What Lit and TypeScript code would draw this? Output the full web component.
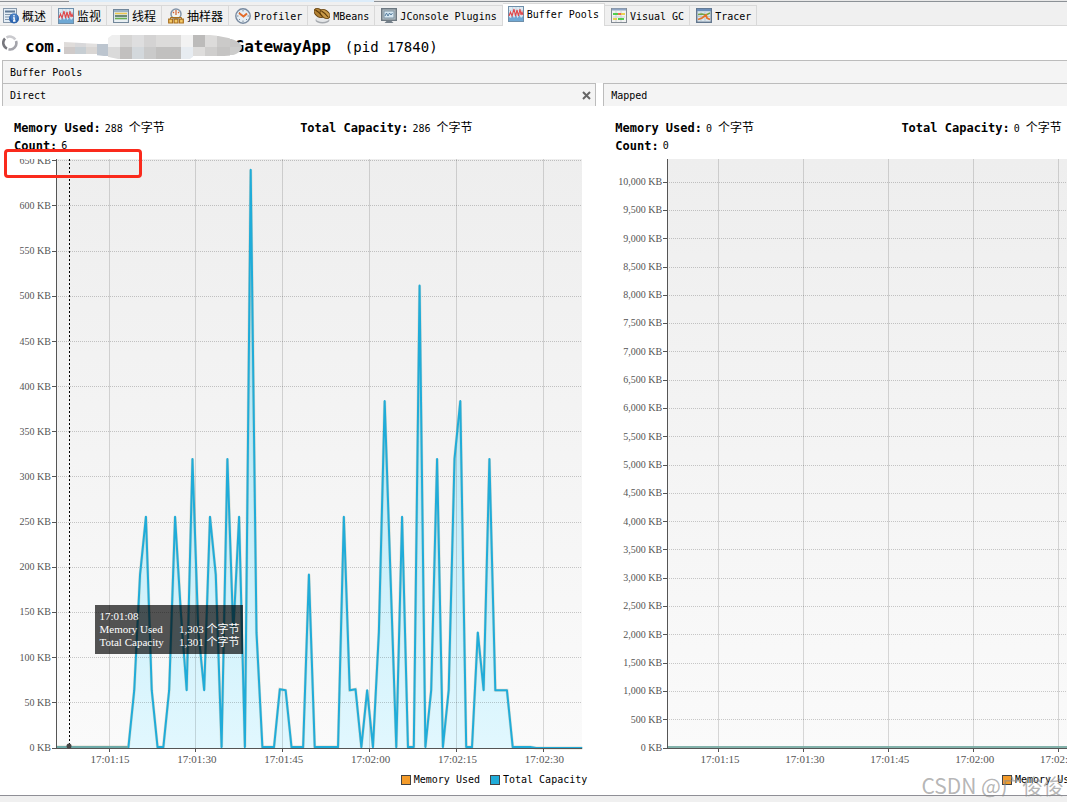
import { LitElement, html, svg, css } from "lit";
import { customElement, property } from "lit/decorators.js";
import { classMap } from "lit/directives/class-map.js";

const wave = svg`
  <rect x=".5" y=".5" width="15" height="15" fill="#dfeaf2" stroke="#6f8faa"/>
  <path d="M1 4.500H15M1 8H15M4.500 1V15M8 1V15M11.500 1V15" stroke="#b7cfdf" stroke-width=".6"/>
  <path d="M1 15V11L3 12L4.500 9L6 12L8 9L9.500 12L11.500 9L13 12L15 10V15Z" fill="#6fa8d4"/>
  <path d="M1 10L2.500 6L4 10L6 3L7.500 10L9 4L10.500 10L12 3L13 9L14 6L15 9" fill="none" stroke="#e0484a" stroke-width="1.100"/>`;

const icons: Record<string, unknown> = {
  overview: svg`
    <rect x=".5" y=".5" width="13" height="14" fill="#e4edf5" stroke="#8798aa"/>
    <path d="M2 3.500H12" stroke="#5d7794" stroke-width="2"/>
    <path d="M2 6.500H9M2 9H7M2 11.500H6" stroke="#8296ab"/>
    <circle cx="11" cy="10.500" r="5" fill="#2c64ae"/>
    <circle cx="11" cy="9" r="3.500" fill="#5b8fce" opacity=".6"/>
    <path d="M11 7V8.400M10 9.800H11.200V13M10 13H12.500" stroke="#fff" stroke-width="1.300" fill="none"/>`,
  monitor: wave,
  threads: svg`
    <rect x=".5" y="1.500" width="15" height="13" fill="#dbe4ea" stroke="#72879a"/>
    <path d="M1 3H15" stroke="#9cb3c7" stroke-width="2"/>
    <path d="M2 5.500H14" stroke="#edc94f" stroke-width="1.500"/>
    <path d="M2 8H14" stroke="#476b52" stroke-width="1.500"/>
    <path d="M2 10.500H14" stroke="#68b050" stroke-width="1.500"/>
    <path d="M2 13H14" stroke="#f8fafb"/>`,
  sampler: svg`
    <circle cx="8" cy="6" r="5" fill="#f2f2ee" stroke="#8394a9" stroke-width="1.500"/>
    <path d="M8 2V7M5 4L6 5M11 4L10 5" stroke="#d05e30" stroke-width="1.200"/>
    <path d="M2.500 11V9.500H13.500V11M8 9V11" fill="none" stroke="#a96e1d"/>
    <path d="M.7 11.200h3.800v3.800H.7zM6.100 11.200h3.800v3.800H6.100zM11.500 11.200h3.800v3.800h-3.800z" fill="#f5cb69" stroke="#a96e1d" stroke-width="1.200"/>`,
  profiler: svg`
    <circle cx="8" cy="8" r="7.200" fill="#e5edf3" stroke="#788aa0" stroke-width="1.400"/>
    <path d="M8 2V3.500M8 12.500V14M2 8H3.500M12.500 8H14M4 4L5 5M12 12L11 11M4 12L5 11" stroke="#7f8c9a"/>
    <path d="M4 5L8.500 8.500L12 5.500" fill="none" stroke="#e36b29" stroke-width="2"/>`,
  mbeans: svg`
    <ellipse cx="8.500" cy="12" rx="7" ry="3.600" fill="#a5a9ae"/>
    <ellipse cx="8.500" cy="11" rx="6.500" ry="3" fill="#e4e6e8"/>
    <ellipse cx="5" cy="5" rx="5.500" ry="3.600" transform="rotate(38 5 5)" fill="#b48335" stroke="#68430d"/>
    <ellipse cx="11" cy="6" rx="5.500" ry="3.600" transform="rotate(38 11 6)" fill="#c99a49" stroke="#68430d"/>
    <path d="M1.500 2Q5 4 8 8M7.500 3Q11 5 14 9" fill="none" stroke="#5d3b0a" stroke-width="1.200"/>`,
  console: svg`
    <rect x=".7" y=".7" width="14.600" height="11.600" fill="#b3bcc3" stroke="#6d7881" stroke-width="1.400"/>
    <rect x="3" y="3" width="10" height="7" fill="#d6e7f1" stroke="#7f93a2"/>
    <path d="M4 8L5.500 5L7 8L8.500 5L10 7L11.500 5" fill="none" stroke="#4a7396" stroke-width=".9"/>
    <path d="M6 12.500H10L12.500 15H3.500Z" fill="#75808a"/>`,
  gc: svg`
    <rect x=".5" y=".5" width="15" height="14" fill="#f2f2f2" stroke="#858d95"/>
    <path d="M1 1.500H15" stroke="#8fa5c4" stroke-width="2"/>
    <path d="M5 3V14M10 3V14M2 9H14" stroke="#cfd3d6"/>
    <path d="M2 6H7M7 11H13" stroke="#22c21b" stroke-width="1.600"/>
    <path d="M7 6H10" stroke="#ef4a27" stroke-width="1.600"/>
    <path d="M10 6H14M2 11H6" stroke="#e8c921" stroke-width="1.600"/>`,
  tracer: svg`
    <rect x=".7" y=".7" width="14.600" height="13.600" fill="#dae5ec" stroke="#63778e" stroke-width="1.400"/>
    <path d="M1 2H15" stroke="#6d8fb9" stroke-width="2.400"/>
    <path d="M5 4V13M9 4V13M2 8.500H14" stroke="#b9c7d1"/>
    <path d="M2 6.500L6 6L10 7L14 5" fill="none" stroke="#74a443" stroke-width="1.500"/>
    <path d="M2 11.500L6 10L10 7L11 10L14 11.500" fill="none" stroke="#e5732b" stroke-width="1.800"/>`,
};

const tabs = [
  { label: "概述", icon: "overview", cjk: true },
  { label: "监视", icon: "monitor", cjk: true },
  { label: "线程", icon: "threads", cjk: true },
  { label: "抽样器", icon: "sampler", cjk: true },
  { label: "Profiler", icon: "profiler" },
  { label: "MBeans", icon: "mbeans" },
  { label: "JConsole Plugins", icon: "console" },
  { label: "Buffer Pools", icon: "monitor", active: true },
  { label: "Visual GC", icon: "gc" },
  { label: "Tracer", icon: "tracer" },
];

/* Kilobytes per sample, taken roughly once a second. */
const directSamples = [
  1, 64, 192, 256, 64, 1, 1, 64, 256, 150, 64, 320, 130, 64, 256, 192, 1, 320,
  128, 256, 1, 640, 128, 1, 1, 1, 65, 64, 1, 1, 1, 192, 1, 1, 1, 1, 1, 256, 64,
  65, 1, 64, 1, 128, 384, 192, 1, 256, 1, 1, 512, 1, 64, 320, 1, 64, 320, 384,
  1, 1, 128, 64, 320, 64, 64, 64, 1, 1, 1, 1, 0,
];

const PLOT_W = 526;
const PLOT_H = 589;
const FIRST_SAMPLE_X = 72.4;
const SAMPLE_STEP = 5.82;
const times = ["17:01:15", "17:01:30", "17:01:45", "17:02:00", "17:02:15", "17:02:30"];
const timeX = times.map((_, i) => 53 + i * 86.8);

const mono = css`"DejaVu Sans Mono", "Noto Sans CJK SC", monospace`;

@customElement("buffer-panel")
export class BufferPanel extends LitElement {
  @property() heading = "";
  @property() used = "0";
  @property() capacity = "0";
  @property() count = "0";
  @property({ type: Number }) step = 50;
  @property({ type: Number }) top = 650;
  @property({ type: Number }) span = 652;
  @property({ type: Boolean }) closable = false;
  @property({ type: Boolean }) hover = false;
  @property({ attribute: false }) samples: number[] = [];

  static styles = css`
    :host { display: flex; flex-direction: column; min-width: 0; min-height: 0; background: #fff; }
    .head {
      display: flex; align-items: center; justify-content: space-between;
      box-sizing: border-box; height: 23px; padding: 0 4px 0 7px;
      border: 1px solid #bcbcbc; border-bottom: 0; background: #f4f4f4;
    }
    h2 { margin: 0; font-size: 10px; font-weight: 400; line-height: 16px; padding-top: 2px; }
    .close { display: flex; border: 0; padding: 0; background: none; }
    .close svg { width: 9px; height: 9px; }
    .info {
      display: grid; grid-template-columns: 1fr 1fr; margin: 0;
      padding: 13px 10px 4px 12px; line-height: 18px;
    }
    .info div { display: flex; align-items: center; height: 18px; white-space: nowrap; }
    dt { font-size: 12px; font-weight: 700; }
    dd { margin: 0 0 0 4px; font-size: 10px; }
    .unit { font-size: 12px; }
    .chart {
      flex: 1; min-height: 0; display: grid;
      grid-template-columns: 54px 1fr; grid-template-rows: 1fr 21px;
      padding-right: 14px;
    }
    .chart.wide { grid-template-columns: 64px 1fr; padding-right: 16px; }
    .ylabels {
      display: flex; flex-direction: column; justify-content: space-between;
      margin: -4px 0 -6px; padding-right: 5px; text-align: right;
      font: 10px/12px "Liberation Serif", serif; color: #555; clip-path: inset(4px 0 0 0);
    }
    .wide .ylabels { margin-top: 17px; clip-path: none; }
    .plot { position: relative; min-height: 0; background: linear-gradient(#eeeeee, #fafafa); }
    .plot > svg { display: block; width: 100%; height: 100%; overflow: visible; }
    .plot path { vector-effect: non-scaling-stroke; fill: none; }
    .grid-v { stroke: #000; stroke-opacity: .14; shape-rendering: crispEdges; }
    .grid-h { stroke: #000; stroke-opacity: .2; stroke-dasharray: 1 1; shape-rendering: crispEdges; }
    .axis { stroke: #555; shape-rendering: crispEdges; }
    .plot .area { fill: url(#fill); }
    .under { stroke: #a09a70; stroke-opacity: .3; stroke-width: 3px; }
    .line { stroke: #20acd9; stroke-width: 2px; stroke-linejoin: round; }
    .base { stroke: #75aaa2; stroke-width: 2px; stroke-opacity: .9; shape-rendering: crispEdges; }
    .cursor { stroke: #000; stroke-dasharray: 2 2; shape-rendering: crispEdges; }
    .xlabels {
      grid-column: 2; display: grid; grid-template-columns: repeat(6, 16.85%);
      margin-left: 2%; padding-top: 4px; text-align: center;
      font: 11px/14px "Liberation Serif", serif; color: #555;
    }
    .tip {
      position: absolute; left: 7.5%; top: 75.7%; box-sizing: border-box;
      width: 148px; padding: 5px 4px; background: rgba(0, 0, 0, .67); color: #fff;
      font: 11px/13px "Liberation Serif", "Noto Sans CJK SC", serif; white-space: nowrap;
    }
    .tip div { display: flex; justify-content: space-between; }
    .legend {
      display: flex; justify-content: flex-end; gap: 10px; margin: 0;
      padding: 3px 9px 7px; list-style: none; line-height: 16px;
    }
    .legend li { display: flex; align-items: center; gap: 3px; white-space: nowrap; }
    .swatch { box-sizing: border-box; width: 10px; height: 10px; border: 1px solid #444; background: #f39b2a; }
    .swatch.blue { background: #20acd9; }
  `;

  private y(kb: number) {
    return PLOT_H - (kb / this.span) * PLOT_H;
  }

  render() {
    const marks: number[] = [];
    for (let v = this.top; v >= 0; v -= this.step) marks.push(v);
    const pts = this.samples.map(
      (kb, i) => `${(FIRST_SAMPLE_X + i * SAMPLE_STEP).toFixed(1)} ${this.y(kb).toFixed(1)}`,
    );
    const trace = pts.length ? `M0 ${this.y(1)}L${pts.join("L")}L${PLOT_W} ${PLOT_H}` : "";
    return html`
      <header class="head">
        <h2>${this.heading}</h2>
        ${this.closable
          ? html`<button class="close" aria-label="Close">
              <svg viewBox="0 0 9 9"><path d="M1 1L8 8M8 1L1 8" stroke="#666" stroke-width="2"/></svg>
            </button>`
          : ""}
      </header>
      <dl class="info">
        <div><dt>Memory Used:</dt><dd>${this.used} <span class="unit">个字节</span></dd></div>
        <div><dt>Total Capacity:</dt><dd>${this.capacity} <span class="unit">个字节</span></dd></div>
        <div><dt>Count:</dt><dd>${this.count}</dd></div>
      </dl>
      <div class=${classMap({ chart: true, wide: this.top > 1000 })}>
        <div class="ylabels">${marks.map((v) => html`<span>${v.toLocaleString("en-US")} KB</span>`)}</div>
        <div class="plot">
          <svg viewBox="0 0 ${PLOT_W} ${PLOT_H}" preserveAspectRatio="none" aria-hidden="true">
            <defs>
              <linearGradient id="fill" gradientUnits="userSpaceOnUse" x1="0" y1="0" x2="0" y2=${PLOT_H}>
                <stop offset="0" stop-color="#8adcf4" stop-opacity=".75"/>
                <stop offset="1" stop-color="#ddf7ff" stop-opacity=".85"/>
              </linearGradient>
            </defs>
            ${trace ? svg`<path class="area" d="${trace}L0 ${PLOT_H}Z"/>` : ""}
            <path class="grid-v" d=${timeX.map((x) => `M${x} 0V${PLOT_H}`).join("")}/>
            <path class="grid-h" d=${marks.map((v) => `M0 ${this.y(v)}H${PLOT_W}`).join("")}/>
            ${trace ? svg`<path class="under" d=${trace}/><path class="line" d=${trace}/>` : ""}
            <path class="base" d="M0 ${PLOT_H - 1}H${trace ? 72 : PLOT_W}"/>
            <path class="axis" d="M0 0V${PLOT_H}H${PLOT_W}${marks.map((v) => `M-4 ${this.y(v)}H0`).join("")}${timeX
              .map((x) => `M${x} ${PLOT_H}v4`)
              .join("")}"/>
            ${this.hover
              ? svg`<path class="cursor" d="M13 0V${PLOT_H}"/><circle cx="13" cy="587" r="2.500" fill="#444"/>`
              : ""}
          </svg>
          ${this.hover
            ? html`<div class="tip" role="tooltip">
                <div>17:01:08</div>
                <div><span>Memory Used</span><span>1,303 个字节</span></div>
                <div><span>Total Capacity</span><span>1,301 个字节</span></div>
              </div>`
            : ""}
        </div>
        <div class="xlabels">${times.map((t) => html`<span>${t}</span>`)}</div>
      </div>
      <ul class="legend">
        <li><span class="swatch"></span>Memory Used</li>
        <li><span class="swatch blue"></span>Total Capacity</li>
      </ul>
    `;
  }
}

/* Mosaic blocks: x, y, width, height, shade. */
const blocks: [number, number, number, number, string][] = [
  [0, 6, 11, 6, "#dfdcda"], [0, 12, 11, 7, "#cfcac9"], [11, 6, 11, 6, "#d8d8da"], [11, 12, 11, 7, "#c7ced3"],
  [22, 6, 12, 6, "#e2e0df"], [22, 12, 12, 7, "#d9d6d4"], [33, 9, 12, 12, "#bcc5cf"],
  [44, 0, 12, 12, "#efefef"], [44, 12, 12, 12, "#dadada"], [56, 0, 12, 12, "#d6d5d4"], [56, 12, 12, 12, "#c2c0bf"],
  [68, 0, 12, 12, "#dededf"], [68, 12, 12, 12, "#d3d8dc"], [80, 0, 12, 12, "#d4d3d3"], [80, 12, 12, 12, "#cacaca"],
  [92, 0, 25, 12, "#dcdbda"], [92, 12, 25, 12, "#c1c0bf"], [117, 0, 12, 12, "#f2f2f2"], [117, 12, 12, 12, "#e7ecf1"],
  [129, 0, 12, 12, "#bcbbba"], [129, 12, 12, 9, "#dedddc"], [141, 0, 12, 12, "#dcdbda"], [141, 12, 12, 9, "#cfcecd"],
  [153, 1, 13, 11, "#cbcac9"], [153, 12, 13, 9, "#c5c4c3"], [166, 4, 12, 8, "#c8c7c6"], [166, 12, 12, 8, "#cccccb"],
];

@customElement("app-root")
export class AppRoot extends LitElement {
  static styles = css`
    :host {
      position: relative; display: flex; flex-direction: column; box-sizing: border-box;
      height: 100vh; min-height: 400px; padding-bottom: 6px; overflow: hidden;
      background: #f0f0f0; color: #000; font: 10px/16px ${mono};
    }
    button { font: inherit; color: inherit; }
    .strip { display: flex; height: 2px; }
    .strip span { box-sizing: border-box; border-bottom: 1px solid #8c9196; }
    .strip .first { width: 69px; background: #eee; }
    .strip .lit { width: 305px; border: 0; background: #dcecf9; }
    .strip .rest { flex: 1; background: #e8e8e8; }
    .tabs {
      display: flex; align-items: flex-end; height: 24px; box-sizing: border-box;
      margin-left: -3px; box-shadow: inset 0 -1px #d9d9d9;
    }
    .tab {
      display: flex; align-items: center; gap: 3px; box-sizing: border-box; height: 21px;
      padding: 0 5px 0 6px; border: solid #d9d9d9; border-width: 1px 1px 1px 0;
      background: #f0f0f0; white-space: nowrap; flex: none;
    }
    .tab span { padding-top: 3px; }
    .tab.cjk { font-size: 12px; }
    .tab.active { height: 23px; padding: 0 5px 3px; border-bottom: 0; background: #fff; }
    .tab svg { width: 16px; height: 16px; flex: none; }
    .title {
      display: flex; align-items: center; height: 34px; padding: 0 2px; background: #fff;
      white-space: nowrap;
    }
    .title h1 { display: flex; align-items: center; margin: 0; padding-top: 8px; font: 700 16px/26px ${mono}; }
    .title .pid { padding: 8px 0 0 14px; font-size: 14px; line-height: 26px; }
    .spinner { width: 16px; height: 16px; margin-right: 7px; }
    .mosaic { width: 178px; height: 24px; margin-right: -7px; z-index: 1; }
    .section {
      box-sizing: border-box; height: 23px; margin-left: 2px; padding-left: 7px; flex: none;
      border: solid #bcbcbc; border-width: 1px 0 0 1px; background: #f4f4f4; line-height: 24px;
    }
    .main { display: flex; flex-direction: column; flex: 1; min-height: 0; background: #fff; border-bottom: 1px solid #8f8f96; }
    .panels {
      flex: 1; min-height: 0; display: grid; grid-template-columns: 55.8% 55.8%; grid-template-rows: 100%;
      column-gap: 7px; margin-left: 2px;
    }
    .mark {
      position: absolute; left: 4px; top: 149px; box-sizing: border-box; width: 138px; height: 29px;
      border: 3px solid #fa2a1c; border-radius: 4px;
    }
    .watermark {
      position: absolute; right: 3px; bottom: 4px; color: rgba(140, 140, 140, .65);
      font: 21px/26px "Noto Sans CJK SC", sans-serif; white-space: nowrap;
    }
  `;

  render() {
    return html`
      <div class="strip"><span class="first"></span><span class="lit"></span><span class="rest"></span></div>
      <nav class="tabs" role="tablist">
        ${tabs.map(
          (t) => html`<button
            role="tab"
            aria-selected=${t.active ? "true" : "false"}
            class=${classMap({ tab: true, cjk: !!t.cjk, active: !!t.active })}
          ><svg viewBox="0 0 16 16" aria-hidden="true">${icons[t.icon]}</svg><span>${t.label}</span></button>`,
        )}
      </nav>
      <div class="main">
        <div class="title">
          <svg class="spinner" viewBox="0 0 16 16" aria-hidden="true">
            <path d="M3 3.500A6.300 6.300 0 0 0 5 13.600" fill="none" stroke="#77777d" stroke-width="2.600"/>
            <path d="M6.500 14.200A6.300 6.300 0 0 0 14 6" fill="none" stroke="#a4a4ab" stroke-width="2.600"/>
            <path d="M4.500 2.600A6.300 6.300 0 0 1 13.300 4.500" fill="none" stroke="#cacace" stroke-width="2.600"/>
          </svg>
          <h1>com.<svg class="mosaic" viewBox="0 0 178 24" aria-hidden="true">
              <clipPath id="blob"><path d="M0 7L36 9L48 0H146Q176 3 178 12Q176 21 160 21H130L126 24H54L40 21L22 19H0Z"/></clipPath>
              <g clip-path="url(#blob)">
                ${blocks.map(([x, y, w, h, c]) => svg`<rect x=${x} y=${y} width=${w} height=${h} fill=${c}/>`)}
              </g>
            </svg>GatewayApp</h1>
          <span class="pid">(pid 17840)</span>
        </div>
        <div class="section">Buffer Pools</div>
        <div class="panels">
          <buffer-panel heading="Direct" used="288" capacity="286" count="6" closable hover
            .samples=${directSamples}></buffer-panel>
          <buffer-panel heading="Mapped" .step=${500} .top=${10000} .span=${10410}></buffer-panel>
        </div>
      </div>
      <div class="mark"></div>
      <div class="watermark">CSDN @广俊俊</div>
    `;
  }
}
